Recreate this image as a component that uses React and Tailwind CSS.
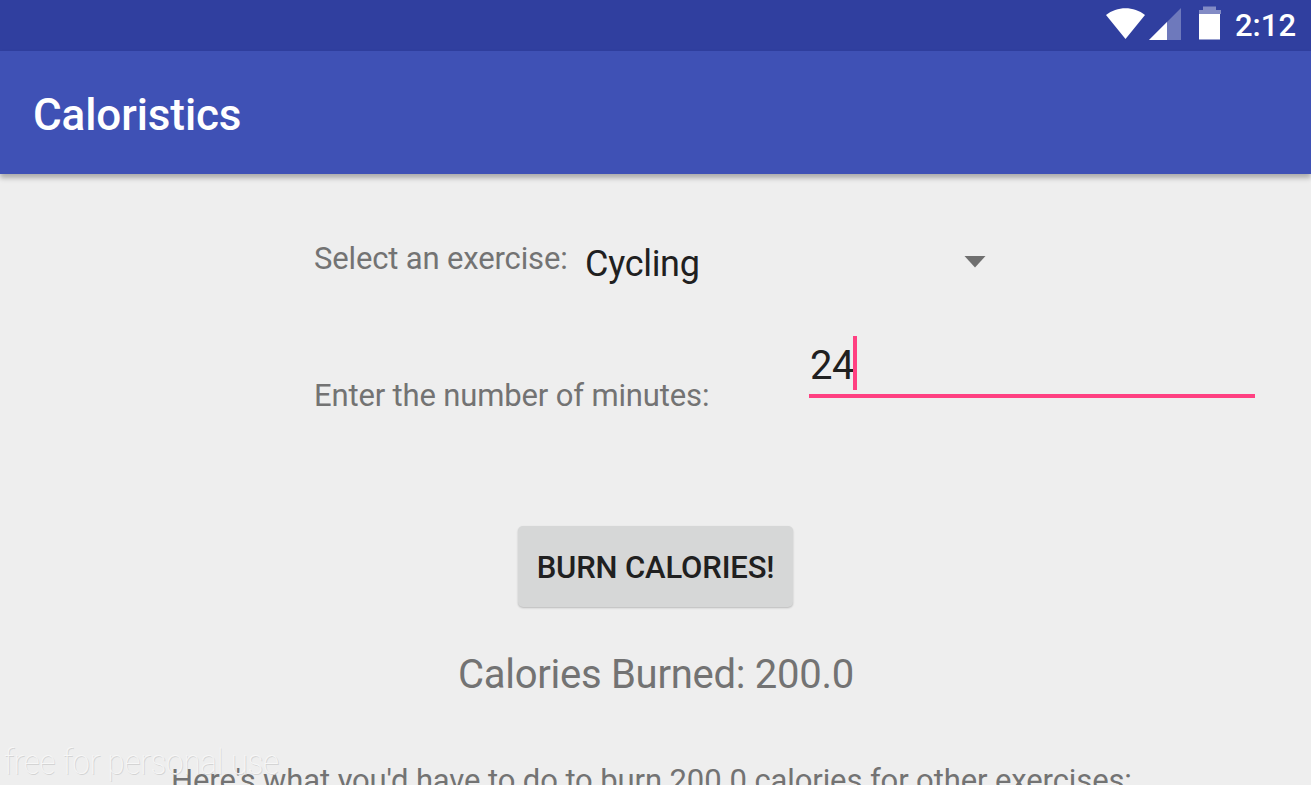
function StatusBar() {
  return (
    <div className="flex h-[51px] shrink-0 items-start bg-[#303f9f] pl-[1105px] text-white">
      <svg className="h-[51px] w-[124px] shrink-0" viewBox="0 0 124 51" aria-hidden="true">
        <path d="M1 15C12 6 29 6 40 15L20.500 39Z" fill="#fff" />
        <path d="M44 40L76 8V40Z" fill="#fff" fillOpacity="0.3" />
        <path d="M44 40L62 22V40Z" fill="#fff" />
        <path d="M98 6.500H111V10H116V14H94V10H98Z" fill="#fff" fillOpacity="0.4" />
        <path d="M94 14H115V39.500H94Z" fill="#fff" />
      </svg>
      <span className="pl-[6px] text-[31px] leading-[51px] font-medium whitespace-nowrap">2:12</span>
    </div>
  );
}

export default function App() {
  return (
    <div className="relative flex h-[785px] w-[1311px] flex-col overflow-hidden bg-[#eeeeee] font-['Roboto',sans-serif] text-[#737373]">
      <StatusBar />
      <header className="z-10 flex h-[123px] shrink-0 items-center bg-[#3f51b5] pl-[33px] shadow-[0_4px_5px_rgba(0,0,0,0.28)]">
        <h1 className="pt-[5px] text-[44px] leading-[52px] font-medium tracking-[-0.1px] whitespace-nowrap text-white">Caloristics</h1>
      </header>
      <main className="flex min-h-0 flex-1 flex-col">
        <div className="flex h-[140px] shrink-0 pt-[61px] pl-[314px]">
          <label className="w-[271px] text-[31px] leading-[48px] tracking-[-0.15px] whitespace-nowrap">Select an exercise:</label>
          <div className="flex h-[60px] w-[401px] justify-between text-[#202020]">
            <span className="text-[36px] leading-[58px] tracking-[-0.3px]">Cycling</span>
            <svg className="mt-[21px] h-[12px] w-[22px]" viewBox="0 0 22 12" aria-hidden="true">
              <path d="M0.500 0H21.500L11 11.500Z" fill="#6f6f6f" />
            </svg>
          </div>
        </div>
        <div className="flex h-[212px] shrink-0 pl-[314px]">
          <label className="w-[495px] pt-[58px] text-[31px] leading-[48px] tracking-[-0.15px] whitespace-nowrap">Enter the number of minutes:</label>
          <div className="mt-[22px] flex h-[62px] w-[446px] border-b-4 border-[#ff4081] text-[#202020]">
            <span className="w-[44px] pl-px text-[40px] leading-[60px] tracking-[-0.5px]">24</span>
            <span className="h-[54px] w-[4px] bg-[#ff4081]" />
          </div>
        </div>
        <button className="ml-[518px] flex h-[81px] w-[275px] shrink-0 items-center justify-center rounded-[5px] bg-[#d6d7d7] pt-[3px] text-[31px] font-medium tracking-[-0.15px] whitespace-nowrap text-[#202020] shadow-[0_1px_2px_rgba(0,0,0,0.22)]">
          BURN CALORIES!
        </button>
        <p className="mt-[43px] pl-[458px] text-[40px] leading-[50px] tracking-[-0.27px] whitespace-nowrap">Calories Burned: 200.0</p>
        <p className="mt-[56px] pl-[171px] text-[31px] leading-[50px] tracking-[-0.11px] whitespace-nowrap">Here's what you'd have to do to burn 200.0 calories for other exercises:</p>
      </main>
      <span className="absolute top-[743px] left-[4px] origin-left scale-x-[0.89] text-[35px] leading-[40px] font-thin whitespace-nowrap text-[#f7f7f7] [text-shadow:1px_1px_0_#d4d4d4]">
        free for personal use
      </span>
    </div>
  );
}
